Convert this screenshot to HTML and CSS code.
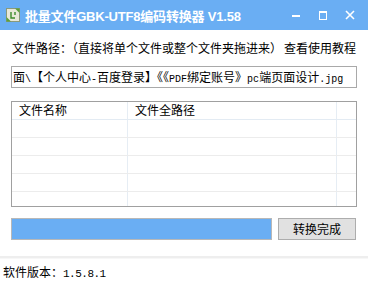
FILE: index.html
```html
<!DOCTYPE html>
<html lang="zh-CN">
<head>
    <meta charset="UTF-8">
    <title>批量文件GBK-UTF8编码转换器 V1.58</title>
    <link rel="stylesheet" href="styles.css">
</head>
<body>
    <div class="titlebar">
        <svg class="app-icon" width="14" height="14" viewBox="0 0 14 14">
            <rect x="0.5" y="0.5" width="13" height="13" fill="#e8e8d8" stroke="#8a9a7a"/>
            <path d="M9 0.5 L13.5 0.5 L13.5 5 Z" fill="#5aa03a"/>
            <path d="M0.5 9 L0.5 13.5 L5 13.5 Z" fill="#5aa03a"/>
            <path d="M5 4 L5 10 L9 10 M9 4 L9 7" stroke="#3c8a2a" stroke-width="1.4" fill="none"/>
        </svg>
        <span class="title">批量文件GBK-UTF8编码转换器 V1.58</span>
        <div class="controls">
            <span class="ctl-min"></span>
            <span class="ctl-max"></span>
            <svg class="ctl-close" width="10" height="10" viewBox="0 0 10 10">
                <path d="M1 1 L9 9 M9 1 L1 9" stroke="#fff" stroke-width="1.6"/>
            </svg>
        </div>
    </div>

    <div class="content">
        <div class="path-label">
            <span>文件路径：（直接将单个文件或整个文件夹拖进来）</span>
            <span class="help">查看使用教程</span>
        </div>
        <div class="path-input">面<span class="asc">\</span>【个人中心<span class="asc">-</span>百度登录】《《<span class="asc">PDF</span>绑定账号》<span class="asc">pc</span>端页面设计<span class="asc">.jpg</span></div>

        <div class="file-list">
            <div class="row head">
                <div class="cell">文件名称</div>
                <div class="cell">文件全路径</div>
                <div class="cell"></div>
            </div>
            <div class="row"><div class="cell"></div><div class="cell"></div><div class="cell"></div></div>
            <div class="row"><div class="cell"></div><div class="cell"></div><div class="cell"></div></div>
            <div class="row"><div class="cell"></div><div class="cell"></div><div class="cell"></div></div>
            <div class="row"><div class="cell"></div><div class="cell"></div><div class="cell"></div></div>
            <div class="row last"><div class="cell"></div><div class="cell"></div><div class="cell"></div></div>
        </div>

        <div class="actions">
            <div class="progress"><div class="progress-fill"></div></div>
            <button class="btn">转换完成</button>
        </div>
    </div>

    <div class="statusbar">软件版本：<span class="ver">1.5.8.1</span></div>
</body>
</html>
```

FILE: styles.css
```css
body {
    margin: 0;
    width: 368px;
    height: 285px;
    background: #ffffff;
    font-family: "Noto Sans CJK SC", "DejaVu Sans", sans-serif;
    font-size: 12px;
    color: #000;
    overflow: hidden;
}
.asc {
    font-family: "Liberation Mono", monospace;
    font-size: 10px;
}
.titlebar {
    height: 30px;
    background: #6aaef3;
    display: flex;
    align-items: center;
    padding-left: 6px;
    box-sizing: border-box;
}
.app-icon {
    margin-right: 5px;
}
.title {
    color: #fff;
    font-family: "Liberation Sans", "Noto Sans CJK SC", sans-serif;
    font-weight: bold;
    font-size: 13px;
    letter-spacing: -0.2px;
    white-space: nowrap;
}
.controls {
    margin-left: auto;
    display: flex;
    align-items: center;
    height: 100%;
}
.ctl-min {
    width: 8px;
    height: 2px;
    background: #fff;
    margin-right: 19px;
    margin-top: 2px;
}
.ctl-max {
    width: 6px;
    height: 6px;
    border: 1px solid #fff;
    border-top-width: 2px;
    margin-right: 18px;
}
.ctl-close {
    margin-right: 13px;
}
.content {
    padding: 8px 11px 0 11px;
}
.path-label {
    display: flex;
    height: 18px;
    align-items: center;
    padding-left: 1px;
    white-space: nowrap;
}
.help {
    margin-left: 2px;
}
.path-input {
    margin-top: 10px;
    height: 22px;
    border: 1px solid #a9a9a9;
    box-sizing: border-box;
    font-size: 12px;
    line-height: 20px;
    padding-left: 1px;
    white-space: nowrap;
    overflow: hidden;
}
.file-list {
    margin-top: 13px;
    height: 106px;
    border: 1px solid #a0a0a0;
    box-sizing: border-box;
    overflow: hidden;
}
.row {
    display: grid;
    grid-template-columns: 116px 209px 20px;
    height: 17px;
    border-bottom: 1px solid #ececec;
}
.row.head {
    border-bottom: 1px solid #e3ebf3;
}
.row.last {
    border-bottom: none;
}
.cell {
    border-right: 1px solid #e6edf4;
    padding-left: 7px;
    line-height: 17px;
    white-space: nowrap;
}
.row.head .cell {
    line-height: 16px;
}
.cell:last-child {
    border-right: none;
}
.actions {
    display: flex;
    margin-top: 11px;
    gap: 6px;
}
.progress {
    width: 261px;
    height: 22px;
    border: 1px solid #b8b8b8;
    box-sizing: border-box;
    background: #e6e6e6;
}
.progress-fill {
    height: 100%;
    width: 100%;
    background: #6aaef3;
}
.btn {
    width: 78px;
    height: 22px;
    background: #e1e1e1;
    border: 1px solid #adadad;
    font-family: "Noto Sans CJK SC", sans-serif;
    font-size: 12px;
    padding: 0;
    line-height: 18px;
}
.statusbar {
    margin-top: 16px;
    border-top: 2px solid #eeeeee;
    box-shadow: inset 0 1px 0 #f7f7f7;
    padding: 5px 3px;
    font-size: 12px;
}
.ver {
    font-family: "Liberation Mono", monospace;
    font-size: 11px;
    letter-spacing: -0.5px;
}
```
